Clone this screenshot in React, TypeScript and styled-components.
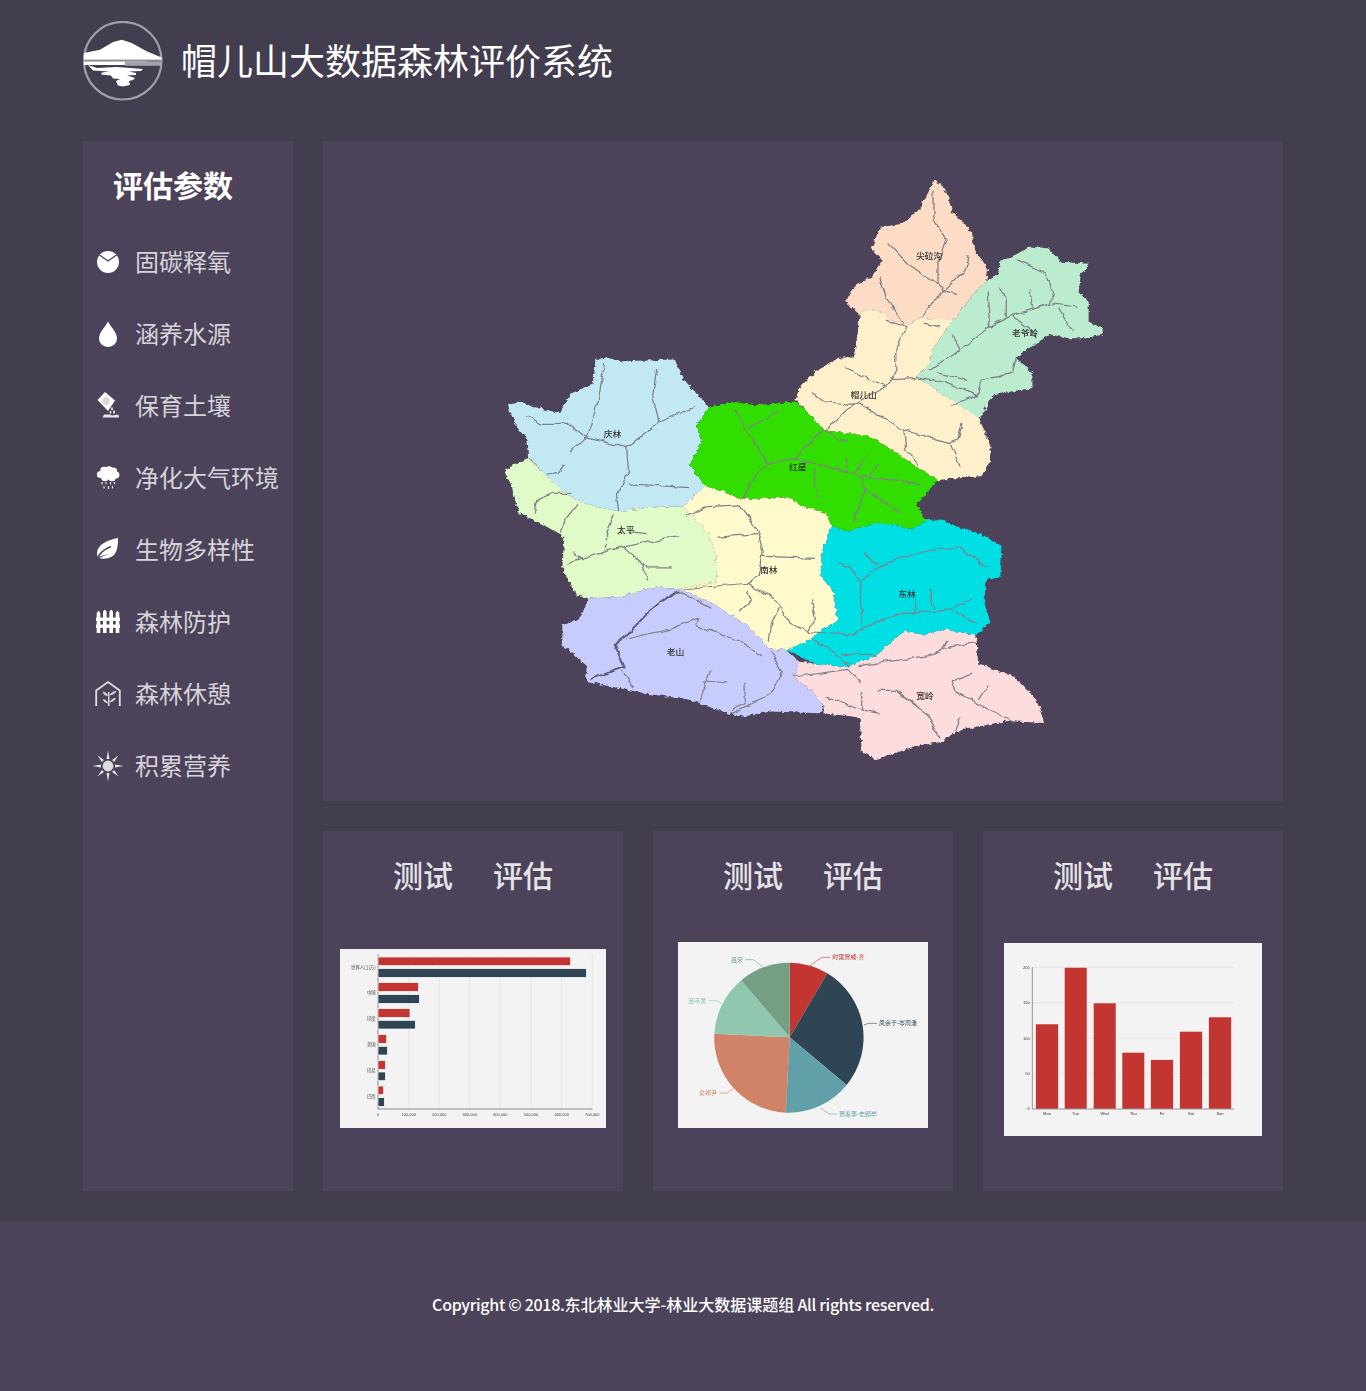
import React from "react"
import styled, { createGlobalStyle } from "styled-components"

const GlobalStyle = createGlobalStyle`
  html, body {
    margin: 0;
    padding: 0;
    background: #423d4f;
    font-family: "Noto Sans CJK SC", "Noto Sans", sans-serif;
  }
  * {
    box-sizing: border-box;
  }
`

const Page = styled.div`
  width: 1366px;
  height: 1391px;
  background: #423d4f;
  display: flex;
  flex-direction: column;
`

const Header = styled.header`
  height: 141px;
  padding: 21px 83px 0;
  display: flex;
  align-items: flex-start;
  gap: 18px;
`

const LogoSvg = styled.svg`
  flex: none;
  filter: blur(0.4px);
`

const SiteTitle = styled.h1`
  margin: 0;
  height: 76px;
  line-height: 76px;
  font-size: 36px;
  font-weight: 400;
  color: #fff;
  white-space: nowrap;
`

const Content = styled.main`
  padding: 0 83px;
  display: flex;
  gap: 30px;
  height: 1050px;
`

const Sidebar = styled.aside`
  width: 210px;
  background: #4c425a;
  padding-left: 11px;
`

const SideTitle = styled.h2`
  margin: 0;
  padding: 18px 0 0 19px;
  height: 85px;
  line-height: 50px;
  font-size: 30px;
  font-weight: 700;
  color: #fff;
`

const ParamRow = styled.div`
  height: 72px;
  display: flex;
  align-items: center;
  gap: 13px;
  font-size: 24px;
  color: #d6d3da;
  white-space: nowrap;
`

const ParamLabel = styled.span`
  position: relative;
  top: -2px;
`

const IconSvg = styled.svg`
  width: 28px;
  height: 28px;
  flex: none;
  overflow: visible;
`

const Right = styled.div`
  width: 960px;
  display: flex;
  flex-direction: column;
  gap: 30px;
`

const MapPanel = styled.section`
  height: 660px;
  background: #4c425a;
  padding: 29px 0 0 167px;
`

const MapSvg = styled.svg`
  display: block;
  width: 630px;
  height: 600px;
`

const Cards = styled.div`
  display: flex;
  gap: 30px;
`

const Card = styled.section`
  width: 300px;
  height: 360px;
  background: #4c425a;
  display: flex;
  flex-direction: column;
  align-items: center;
`

const CardTabs = styled.div`
  height: 90px;
  padding-bottom: 5px;
  display: flex;
  gap: 40px;
  align-items: center;
  font-size: 30px;
  font-weight: 500;
  color: #e4e2e7;
`

const ChartFrame = styled.svg<{ $top: number }>`
  display: block;
  margin-top: ${(p) => p.$top}px;
  background: #f3f3f3;
  filter: blur(0.45px);
  flex: none;
`

const Footer = styled.footer`
  margin-top: 30px;
  height: 170px;
  background: #4c425a;
  display: flex;
  align-items: center;
  justify-content: center;
  padding-bottom: 4px;
  font-size: 16px;
  font-weight: 500;
  color: #fff;
  white-space: pre;
`

const Latin = styled.span`
  letter-spacing: -0.3px;
`

const Logo = () => (
  <LogoSvg width="80" height="80" viewBox="0 0 80 80">
    <circle cx="39.7" cy="39.7" r="38.8" fill="none" stroke="#a09ea6" strokeWidth="2.2" />
    <path
      d="M1 32 L17 28.7 L30 21 L38.7 18.7 L48.7 22 L63.7 30.3 L78.7 36.5 L78.7 38.7 L1 38.7 Z"
      fill="#fff"
    />
    <rect x="1" y="39" width="78" height="1.4" fill="#8f8d96" />
    <rect x="1" y="40.4" width="63" height="3.6" fill="#fff" />
    <rect x="42" y="40.4" width="37" height="4.4" fill="#a3a1a9" />
    <path
      d="M5 44 L14 47 L34 46 L60 48 L58 50 L46 50.5 L53 52 L53 54 L44 54.5 L52 57 L50 59 L46 60 L47 64 L40 65.5 L35 64.5 L33 60 L37 58 L30 57.5 L28 54.5 L18 53.5 L19 51.5 L26 50.5 L10 49.5 Z"
      fill="#fff"
    />
  </LogoSvg>
)

const iconColor = "#fff"

const PieIcon = () => (
  <IconSvg viewBox="0 0 28 28">
    <circle cx="14" cy="14" r="11" fill={iconColor} />
    <polyline points="5.5,7 14,13 22.5,7" fill="none" stroke="#4c425a" strokeWidth="1.3" />
  </IconSvg>
)

const DropIcon = () => (
  <IconSvg viewBox="0 0 28 28">
    <path d="M14 1.5 C12 6 5 12 5 18.5 a9 8.5 0 0 0 18 0 C23 12 16 6 14 1.5Z" fill={iconColor} />
  </IconSvg>
)

const SoilIcon = () => (
  <IconSvg viewBox="0 0 28 28">
    <path d="M11 0 L21 8.5 L14 19 L3.5 8 Z" fill={iconColor} />
    <circle cx="12" cy="9" r="3.8" fill="#d9d9dc" />
    <path d="M18 15.5 v2.5 M16.5 19 v2.5 M20 18.5 v3" stroke={iconColor} strokeWidth="1.5" />
    <path d="M8.5 25.5 L10 22.5 L16 22.5 L18 23.5 L24.5 22.5 L25 25.5 Z" fill="#e6e6e8" />
  </IconSvg>
)

const CloudIcon = () => (
  <IconSvg viewBox="0 0 28 28">
    <g fill={iconColor}>
      <circle cx="6.5" cy="10.5" r="3.6" />
      <circle cx="10" cy="6.5" r="3.8" />
      <circle cx="15" cy="5.8" r="3.6" />
      <circle cx="19.5" cy="7" r="3.6" />
      <circle cx="22" cy="11" r="3.4" />
      <circle cx="18" cy="13.5" r="3.8" />
      <circle cx="11" cy="13.5" r="3.8" />
      <rect x="8" y="8" width="13" height="7" />
    </g>
    <path
      d="M8 18 v2.5 M12 18 v2.2 M16.5 18 v2.5 M20.5 18 v2.2 M10 22 v2.5 M14.5 22 v3 M18.5 22 v2.5"
      stroke="#e6e6e8"
      strokeWidth="1.2"
    />
  </IconSvg>
)

const LeafIcon = () => (
  <IconSvg viewBox="0 0 28 28">
    <path d="M24 2 C14 4 3.5 8 3 17 L3.5 21 L22 16 C24 11 24 6 24 2Z M5 22 C10 24 21 22 22 15Z" fill={iconColor} />
    <path d="M3.5 22 C6 16 11 13 17 10.5" fill="none" stroke="#4c425a" strokeWidth="1.4" />
  </IconSvg>
)

const FenceIcon = () => (
  <IconSvg viewBox="0 0 28 28">
    <path
      d="M2.7 5 L4.5 2.5 L6.3 5 L6.3 25 L2.7 25Z M9 3.5 L10.8 1.5 L12.6 3.5 L12.6 25 L9 25Z M15.4 3.5 L17.2 1.5 L19 3.5 L19 25 L15.4 25Z M21.7 5 L23.5 2.5 L25.3 5 L25.3 25 L21.7 25Z"
      fill={iconColor}
    />
    <rect x="2" y="9.5" width="24" height="3.4" fill={iconColor} />
    <rect x="2" y="16.5" width="24" height="3.4" fill={iconColor} />
  </IconSvg>
)

const HouseIcon = () => (
  <IconSvg viewBox="0 0 28 28">
    <polyline points="2.2,26 2.2,10.5 14,2 25.8,10.5 25.8,26" fill="none" stroke="#e0dee3" strokeWidth="1.8" />
    <path d="M14.8 12 V26" stroke="#d4d2d8" strokeWidth="1.6" />
    <g fill="#d4d2d8">
      <path d="M14 16 C11 16 9 14.5 8.7 11.7 C11.5 11.7 13.5 13.5 14 16Z" />
      <path d="M15.5 15.5 C18.5 15.3 21.5 13.5 22.5 10.7 C19 11 16.5 12.8 15.5 15.5Z" />
      <path d="M14 23.5 C11.5 23.3 9.3 21.5 8.7 19 C11.5 19.2 13.5 21 14 23.5Z" />
      <path d="M15.5 22.5 C18.3 22.3 21 20.5 22 17.7 C19 18 16.5 19.8 15.5 22.5Z" />
    </g>
  </IconSvg>
)

const SunIcon = () => (
  <IconSvg viewBox="0 0 28 28">
    <circle cx="14" cy="14" r="5.4" fill="#dcdcde" />
    <path
      d="M14 -1.5 L15.5 7 L12.5 7Z M14 29.5 L15.5 21 L12.5 21Z M-1.5 14 L7 12.5 L7 15.5Z M29.5 14 L21 12.5 L21 15.5Z M3.5 3.5 L10 7.9 L7.9 10Z M24.5 3.5 L20.1 10 L18 7.9Z M3.5 24.5 L7.9 18 L10 20.1Z M24.5 24.5 L18 20.1 L20.1 18Z"
      fill="#e4e4e6"
    />
  </IconSvg>
)

const params = [
  { label: "固碳释氧", icon: <PieIcon /> },
  { label: "涵养水源", icon: <DropIcon /> },
  { label: "保育土壤", icon: <SoilIcon /> },
  { label: "净化大气环境", icon: <CloudIcon /> },
  { label: "生物多样性", icon: <LeafIcon /> },
  { label: "森林防护", icon: <FenceIcon /> },
  { label: "森林休憩", icon: <HouseIcon /> },
  { label: "积累营养", icon: <SunIcon /> },
]

const regions = [
  {
    fill: "#fcdcc4",
    points:
      "1105,28 1125,40 1140,70 1150,110 1175,135 1200,165 1205,210 1225,235 1240,260 1235,290 1200,330 1155,390 1130,395 1100,390 1070,385 1035,410 1000,395 975,370 935,365 920,378 885,345 905,305 950,280 975,235 950,205 970,150 1030,140 1070,100 1090,60",
  },
  {
    fill: "#bcecd0",
    points:
      "1155,390 1200,330 1235,290 1265,270 1270,240 1310,220 1345,200 1390,205 1420,240 1490,245 1470,275 1465,320 1490,345 1490,400 1525,410 1525,430 1480,440 1440,440 1395,430 1350,460 1310,490 1350,530 1350,570 1290,580 1250,590 1218,650 1170,625 1145,600 1060,540 1090,510 1105,465 1130,425",
  },
  {
    fill: "#fff0cc",
    points:
      "920,378 935,365 975,370 1000,395 1035,410 1070,385 1100,390 1155,390 1130,425 1105,465 1090,510 1060,540 1145,600 1218,650 1245,720 1245,760 1225,800 1115,810 1060,775 1000,730 940,695 830,680 790,630 760,600 770,570 810,525 870,490 905,490 915,430",
  },
  {
    fill: "#c2e8f4",
    points:
      "45,615 75,605 110,620 175,635 200,585 255,560 265,495 290,490 330,500 460,495 480,545 545,620 515,665 525,710 497,770 535,825 480,880 415,880 320,892 265,880 210,860 150,810 95,750 90,700 60,660",
  },
  {
    fill: "#e0fac8",
    points:
      "35,785 95,752 150,810 210,860 265,880 320,892 415,880 480,880 545,950 560,1000 565,1075 470,1095 400,1090 330,1115 245,1120 215,1110 180,1040 185,960 130,925 70,895 55,830",
  },
  {
    fill: "#fffacc",
    points:
      "480,880 535,825 630,860 745,855 780,880 835,895 850,930 825,1000 825,1060 855,1100 865,1180 835,1195 800,1225 740,1255 695,1250 640,1190 550,1130 470,1095 565,1075 560,1000 545,950",
  },
  {
    fill: "#c8ccfc",
    points:
      "245,1120 330,1115 400,1090 470,1095 550,1130 640,1190 695,1250 740,1255 770,1285 755,1325 800,1360 830,1400 820,1420 700,1415 630,1428 590,1420 500,1385 400,1370 300,1350 240,1335 240,1295 180,1240 180,1190 225,1170",
  },
  {
    fill: "#fcdcdc",
    points:
      "770,1285 810,1290 885,1298 960,1270 1030,1205 1080,1215 1130,1200 1210,1215 1215,1290 1305,1325 1360,1385 1380,1445 1290,1440 1180,1460 1120,1495 1060,1505 960,1540 925,1520 920,1430 830,1420 830,1400 800,1360 755,1325",
  },
  {
    fill: "#00e0e4",
    points:
      "850,930 890,945 950,925 1000,925 1050,938 1085,915 1120,912 1170,935 1240,960 1275,985 1270,1065 1235,1070 1230,1130 1245,1180 1210,1215 1130,1200 1080,1215 1030,1205 960,1270 885,1298 810,1290 740,1255 800,1225 835,1195 865,1180 855,1100 825,1060 825,1000",
  },
  {
    fill: "#33dd00",
    points:
      "545,620 600,605 660,615 760,605 790,630 830,680 940,695 1000,730 1060,775 1115,810 1060,875 1085,915 1050,938 1000,925 950,925 890,945 850,930 835,895 780,880 745,855 630,860 535,825 497,770 525,710 515,665",
  },
]

const rivers = [
  "M1105,50 L1105,130 L1135,180 L1115,240 L1115,295 L1130,315 L1165,325",
  "M990,190 L1040,245 L1115,300",
  "M1190,225 L1180,265 L1130,315 L1085,365 L1080,385",
  "M970,280 L985,330 L1030,400",
  "M1310,235 L1385,270 L1400,320 L1395,350 L1300,380 L1240,410 L1170,470 L1095,525",
  "M1400,350 L1460,358",
  "M1415,360 L1450,420",
  "M1240,320 L1245,390 L1240,410",
  "M1265,305 L1285,335 L1285,385",
  "M1345,315 L1350,360",
  "M1150,430 L1170,470",
  "M1300,380 L1340,410 L1360,440",
  "M1060,540 L1130,555 L1215,590 L1150,615",
  "M1170,570 L1215,590 L1225,550 L1300,530 L1310,490",
  "M1115,530 L1190,550",
  "M1035,410 L1010,470 L1010,530 L985,565 L890,625 L835,680",
  "M985,395 L1035,410",
  "M880,515 L950,550 L985,565",
  "M800,580 L830,605 L890,612 L920,612 L1030,680 L1140,715 L1165,705 L1175,660",
  "M1030,680 L1035,730 L1065,770",
  "M1145,715 L1170,775",
  "M1000,548 L1060,545",
  "M1080,400 L1120,410",
  "M610,625 L645,690 L690,770 L660,800 L630,860",
  "M645,675 L720,630",
  "M690,770 L760,755 L830,680 L890,710",
  "M760,755 L820,770 L900,795 L1070,822",
  "M805,780 L815,860",
  "M885,790 L890,750",
  "M905,795 L940,745",
  "M945,805 L965,770",
  "M920,800 L935,835 L905,920",
  "M935,835 L1020,895",
  "M285,505 L270,600 L240,700 L200,740",
  "M90,640 L130,665 L200,665 L240,700 L340,725 L420,660 L510,620",
  "M415,520 L405,590 L420,660",
  "M340,725 L345,790 L315,850 L320,890",
  "M345,820 L420,825 L495,830",
  "M140,795 L170,790 L185,770",
  "M110,895 L120,860 L155,845 L200,845",
  "M220,870 L190,910 L175,945",
  "M210,1000 L230,1020",
  "M190,1030 L280,1000 L330,985 L470,958",
  "M290,990 L290,950 L310,900",
  "M330,985 L390,1040 L450,1040",
  "M380,1030 L390,1075",
  "M345,945 L390,950",
  "M490,905 L540,880 L620,875 L665,940 L680,1000 L670,1060 L640,1080 L480,1095",
  "M565,960 L665,950",
  "M680,1010 L810,1015",
  "M640,1080 L720,1130 L745,1185 L800,1210",
  "M620,1155 L650,1125 L640,1100",
  "M720,1140 L700,1190 L695,1235",
  "M800,1125 L810,1170 L790,1205",
  "M930,1000 L965,1035",
  "M865,1025 L900,1040 L920,1075",
  "M1235,1040 L1170,985 L1090,995 L980,1030 L920,1075 L925,1130 L930,1200",
  "M800,1210 L900,1215 L950,1185 L1020,1160 L1140,1150 L1200,1120",
  "M1145,1150 L1210,1185",
  "M1090,1095 L1105,1145",
  "M1060,1115 L1060,1155",
  "M805,1225 L870,1270 L895,1300",
  "M880,1265 L960,1270",
  "M470,1100 L550,1145",
  "M340,1225 L450,1200 L520,1170 L510,1190 L620,1230 L675,1270",
  "M700,1260 L725,1310 L700,1370 L600,1420",
  "M330,1310 L355,1350",
  "M550,1305 L520,1390",
  "M530,1335 L590,1340",
  "M635,1340 L635,1390 L605,1410",
  "M755,1325 L890,1305 L920,1340",
  "M920,1295 L1090,1270 L1130,1250 L1210,1235",
  "M1140,1230 L1130,1250",
  "M965,1360 L1010,1360 L1085,1420 L1120,1485",
  "M835,1375 L920,1410 L970,1420",
  "M925,1365 L925,1410",
  "M1010,1360 L1070,1405",
  "M1150,1335 L1200,1315",
  "M1150,1335 L1160,1365 L1300,1440",
  "M1240,1345 L1215,1385",
  "M1170,1430 L1160,1465",
]

const mapLabels = [
  { text: "尖砬沟", x: 1093, y: 224 },
  { text: "老爷岭", x: 1332, y: 426 },
  { text: "帽儿山", x: 930, y: 587 },
  { text: "庆林", x: 305, y: 690 },
  { text: "红星", x: 766, y: 775 },
  { text: "太平", x: 338, y: 940 },
  { text: "南林", x: 694, y: 1043 },
  { text: "东林", x: 1038, y: 1106 },
  { text: "老山", x: 462, y: 1259 },
  { text: "宽岭", x: 1083, y: 1373 },
]

const ForestMap = () => (
  <MapSvg viewBox="0 0 1568 1568" preserveAspectRatio="none">
    <defs>
      <filter id="rough" x="-5%" y="-5%" width="110%" height="110%">
        <feTurbulence type="fractalNoise" baseFrequency="0.09" numOctaves="2" seed="7" />
        <feDisplacementMap in="SourceGraphic" scale="13" xChannelSelector="R" yChannelSelector="G" />
        <feGaussianBlur stdDeviation="1.6" />
      </filter>
      <filter id="wavy" x="-5%" y="-5%" width="110%" height="110%">
        <feTurbulence type="fractalNoise" baseFrequency="0.035" numOctaves="2" seed="11" />
        <feDisplacementMap in="SourceGraphic" scale="15" xChannelSelector="R" yChannelSelector="G" />
        <feGaussianBlur stdDeviation="1.2" />
      </filter>
      <filter id="soft" x="-5%" y="-5%" width="110%" height="110%">
        <feGaussianBlur stdDeviation="1" />
      </filter>
    </defs>
    <g filter="url(#rough)">
      {regions.map((r) => (
        <polygon key={r.fill} points={r.points} fill={r.fill} />
      ))}
    </g>
    <g filter="url(#wavy)">
      <g fill="none" stroke="#7f8188" strokeWidth="3.2" strokeLinejoin="round">
        {rivers.map((d) => (
          <path key={d} d={d} />
        ))}
      </g>
      <path
        d="M470,1100 L400,1150 L340,1215 L310,1240 L335,1300 L250,1330"
        fill="none"
        stroke="#5f5a7c"
        strokeWidth="5"
        strokeLinejoin="round"
      />
    </g>
    <g filter="url(#soft)">
      {mapLabels.map((l) => (
        <text key={l.text} x={l.x} y={l.y + 9} fontSize="22" fontWeight="500" textAnchor="middle" fill="#333">
          {l.text}
        </text>
      ))}
    </g>
  </MapSvg>
)

const hBars = [
  { red: 707, dark: 754, redY: 51, darkY: 86, label: "世界人口(万)", labelY: 82 },
  { red: 250, dark: 253, redY: 128, darkY: 164, label: "中国", labelY: 159 },
  { red: 225, dark: 241, redY: 206, darkY: 241, label: "印度", labelY: 236 },
  { red: 155, dark: 157, redY: 284, darkY: 319, label: "美国", labelY: 314 },
  { red: 151, dark: 151, redY: 362, darkY: 396, label: "印尼", labelY: 391 },
  { red: 146, dark: 148, redY: 438, darkY: 473, label: "巴西", labelY: 469 },
]

const hTicks = [
  { x: 129, label: "0" },
  { x: 221, label: "100,000" },
  { x: 313, label: "200,000" },
  { x: 404, label: "300,000" },
  { x: 496, label: "400,000" },
  { x: 588, label: "500,000" },
  { x: 680, label: "600,000" },
  { x: 772, label: "700,000" },
]

const HBarChart = () => (
  <ChartFrame $top={28} width="266" height="179" viewBox="15 27 798 537">
    {hTicks.slice(1).map((t) => (
      <line key={t.x} x1={t.x} x2={t.x} y1="43" y2="507" stroke="#dedede" strokeWidth="2" />
    ))}
    <path d="M129 43 V507 H772" fill="none" stroke="#555" strokeWidth="2" />
    {hBars.map((b) => (
      <g key={b.label} stroke="#fff" strokeWidth="2">
        <rect x="129" y={b.redY} width={b.red - 129} height="26" fill="#c23531" />
        <rect x="129" y={b.darkY} width={b.dark - 129} height="26" fill="#2f4554" />
      </g>
    ))}
    {hBars.map((b) => (
      <text key={b.label} x="122" y={b.labelY + 4} fontSize="13" textAnchor="end" fill="#444">
        {b.label}
      </text>
    ))}
    {hTicks.map((t) => (
      <text key={t.x} x={t.x} y="527" fontSize="12" textAnchor="middle" fill="#444" fontFamily="Liberation Sans">
        {t.label}
      </text>
    ))}
  </ChartFrame>
)

const slices = [
  { fill: "#c23531", d: "M359 307 L359 83 A225 225 0 0 1 472 115 Z" },
  { fill: "#2f4554", d: "M359 307 L472 115 A225 225 0 0 1 530 450 Z" },
  { fill: "#61a0a8", d: "M359 307 L530 450 A225 225 0 0 1 347 533 Z" },
  { fill: "#d08367", d: "M359 307 L347 533 A225 225 0 0 1 133 296 Z" },
  { fill: "#91c7ae", d: "M359 307 L133 296 A225 225 0 0 1 214 136 Z" },
  { fill: "#749f83", d: "M359 307 L214 136 A225 225 0 0 1 359 83 Z" },
]

const pieLabels = [
  { text: "时寓贺威-齐", x: 487, y: 73, color: "#c23531", line: "M420 92 L455 67 L481 67" },
  { text: "凤余于-岑周潘", x: 627, y: 271, color: "#2f4554", line: "M582 270 L595 265 L621 265" },
  { text: "贺秦李-史颜毕", x: 507, y: 543, color: "#61a0a8", line: "M450 518 L478 537 L501 537" },
  { text: "俞祁尹", x: 87, y: 480, color: "#d08367", line: "M190 460 L172 474 L148 474" },
  { text: "苗韦黄", x: 55, y: 203, color: "#91c7ae", line: "M156 207 L140 197 L116 197" },
  { text: "昌宋", x: 183, y: 80, color: "#749f83", line: "M280 96 L250 74 L225 74" },
]

const PieChart = () => (
  <ChartFrame $top={21} width="250" height="186" viewBox="24 21 750 558">
    {pieLabels.map((l) => (
      <path key={l.text} d={l.line} fill="none" stroke={l.color} strokeWidth="2.4" opacity="0.75" />
    ))}
    {slices.map((s) => (
      <path key={s.fill} d={s.d} fill={s.fill} />
    ))}
    {pieLabels.map((l) => (
      <text key={l.text} x={l.x} y={l.y} fontSize="18" fill={l.color}>
        {l.text}
      </text>
    ))}
  </ChartFrame>
)

const vBars = [
  { x: 107, top: 258, label: "Mon" },
  { x: 193, top: 88, label: "Tue" },
  { x: 280, top: 195, label: "Wed" },
  { x: 366, top: 343, label: "Thu" },
  { x: 452, top: 365, label: "Fri" },
  { x: 539, top: 280, label: "Sat" },
  { x: 626, top: 237, label: "Sun" },
]

const vTicks = [
  { y: 88, label: "200" },
  { y: 194, label: "150" },
  { y: 301, label: "100" },
  { y: 407, label: "50" },
  { y: 513, label: "0" },
]

const BarChart = () => (
  <ChartFrame $top={22} width="258" height="193" viewBox="12 15 774 579">
    {vTicks.slice(0, 4).map((t) => (
      <line key={t.y} x1="97" x2="703" y1={t.y} y2={t.y} stroke="#e2e2e2" strokeWidth="2.4" />
    ))}
    {vBars.map((b) => (
      <rect key={b.x} x={b.x} y={b.top} width="68" height={513 - b.top} fill="#c23531" stroke="#fff" strokeWidth="1.5" />
    ))}
    <path d="M97 88 V513 H703" fill="none" stroke="#666" strokeWidth="2" />
    {vTicks.map((t) => (
      <text key={t.y} x="89" y={t.y + 4} fontSize="12" textAnchor="end" fill="#333" fontFamily="Liberation Sans">
        {t.label}
      </text>
    ))}
    {vBars.map((b) => (
      <text key={b.label} x={b.x + 34} y="532" fontSize="12" textAnchor="middle" fill="#333" fontFamily="Liberation Sans">
        {b.label}
      </text>
    ))}
  </ChartFrame>
)

const charts = [<HBarChart key="h" />, <PieChart key="p" />, <BarChart key="v" />]

const App = () => {
  return (
    <Page>
      <GlobalStyle />
      <Header>
        <Logo />
        <SiteTitle>帽儿山大数据森林评价系统</SiteTitle>
      </Header>
      <Content>
        <Sidebar>
          <SideTitle>评估参数</SideTitle>
          {params.map((p) => (
            <ParamRow key={p.label}>
              {p.icon}
              <ParamLabel>{p.label}</ParamLabel>
            </ParamRow>
          ))}
        </Sidebar>
        <Right>
          <MapPanel>
            <ForestMap />
          </MapPanel>
          <Cards>
            {charts.map((chart) => (
              <Card key={chart.key}>
                <CardTabs>
                  <span>测试</span>
                  <span>评估</span>
                </CardTabs>
                {chart}
              </Card>
            ))}
          </Cards>
        </Right>
      </Content>
      <Footer>
        <Latin>Copyright © 2018.</Latin>东北林业大学-林业大数据课题组<Latin> All rights reserved.</Latin>
      </Footer>
    </Page>
  )
}

export default App
